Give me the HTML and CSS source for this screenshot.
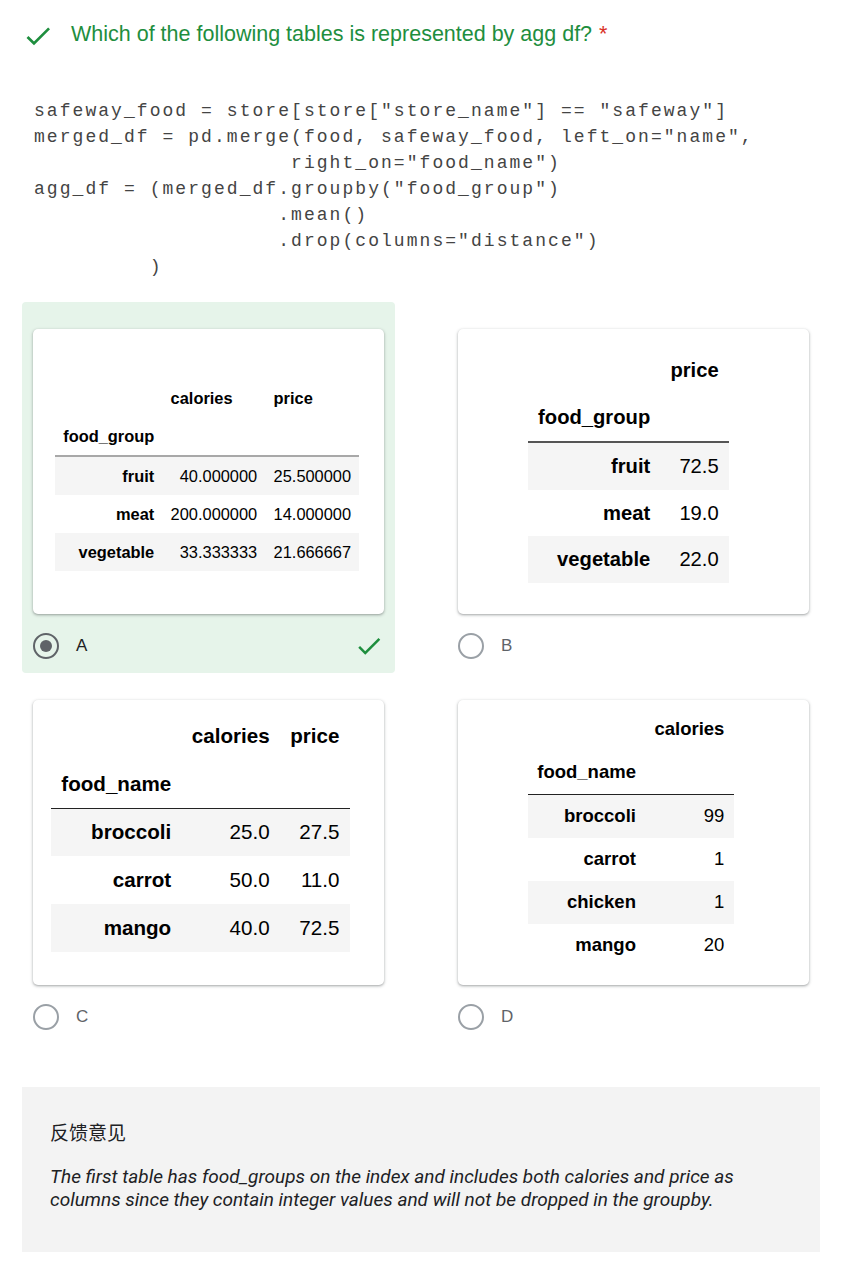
FILE: index.html
```html
<!DOCTYPE html>
<html lang="en">
<head>
<meta charset="utf-8">
<title>Question</title>
<link rel="stylesheet" href="styles.css">
</head>
<body>
<div class="page">
  <div class="q-head">
    <svg class="q-check" viewBox="0 0 24 24"><path d="M9 16.17L4.83 12l-1.42 1.41L9 19 21 7l-1.41-1.41z"/></svg>
    <span class="q-title">Which of the following tables is represented by agg df?<span class="req">*</span></span>
  </div>

<pre class="code">safeway_food = store[store["store_name"] == "safeway"]
merged_df = pd.merge(food, safeway_food, left_on="name",
                    right_on="food_name")
agg_df = (merged_df.groupby("food_group")
                   .mean()
                   .drop(columns="distance")
         )</pre>

  <div class="options">
    <div class="opt opt-correct">
      <div class="card card-a">
        <table class="df">
          <thead>
            <tr><th></th><th>calories</th><th>price</th></tr>
            <tr><th>food_group</th><th></th><th></th></tr>
          </thead>
          <tbody>
            <tr><th>fruit</th><td>40.000000</td><td>25.500000</td></tr>
            <tr><th>meat</th><td>200.000000</td><td>14.000000</td></tr>
            <tr><th>vegetable</th><td>33.333333</td><td>21.666667</td></tr>
          </tbody>
        </table>
      </div>
      <div class="radio-row">
        <span class="radio radio-on"></span>
        <span class="label label-on">A</span>
        <svg class="ok" viewBox="0 0 24 24"><path d="M9 16.17L4.83 12l-1.42 1.41L9 19 21 7l-1.41-1.41z"/></svg>
      </div>
    </div>

    <div class="opt">
      <div class="card card-b">
        <table class="df">
          <thead>
            <tr><th></th><th>price</th></tr>
            <tr><th>food_group</th><th></th></tr>
          </thead>
          <tbody>
            <tr><th>fruit</th><td>72.5</td></tr>
            <tr><th>meat</th><td>19.0</td></tr>
            <tr><th>vegetable</th><td>22.0</td></tr>
          </tbody>
        </table>
      </div>
      <div class="radio-row">
        <span class="radio"></span>
        <span class="label">B</span>
      </div>
    </div>

    <div class="opt">
      <div class="card card-c">
        <table class="df">
          <thead>
            <tr><th></th><th>calories</th><th>price</th></tr>
            <tr><th>food_name</th><th></th><th></th></tr>
          </thead>
          <tbody>
            <tr><th>broccoli</th><td>25.0</td><td>27.5</td></tr>
            <tr><th>carrot</th><td>50.0</td><td>11.0</td></tr>
            <tr><th>mango</th><td>40.0</td><td>72.5</td></tr>
          </tbody>
        </table>
      </div>
      <div class="radio-row">
        <span class="radio"></span>
        <span class="label">C</span>
      </div>
    </div>

    <div class="opt">
      <div class="card card-d">
        <table class="df">
          <thead>
            <tr><th></th><th>calories</th></tr>
            <tr><th>food_name</th><th></th></tr>
          </thead>
          <tbody>
            <tr><th>broccoli</th><td>99</td></tr>
            <tr><th>carrot</th><td>1</td></tr>
            <tr><th>chicken</th><td>1</td></tr>
            <tr><th>mango</th><td>20</td></tr>
          </tbody>
        </table>
      </div>
      <div class="radio-row">
        <span class="radio"></span>
        <span class="label">D</span>
      </div>
    </div>
  </div>

  <div class="feedback">
    <div class="fb-title">反馈意见</div>
    <p class="fb-text">The first table has food_groups on the index and includes both calories and price as columns since they contain integer values and will not be dropped in the groupby.</p>
  </div>
</div>
</body>
</html>
```

FILE: styles.css
```css
html, body {
  margin: 0;
  padding: 0;
  background: #fff;
}

.page {
  padding: 18px 21px 17px 22px;
  font-family: "Liberation Sans", Arial, sans-serif;
  color: #202124;
}

.q-head {
  display: flex;
  align-items: center;
  height: 32px;
}

.q-check {
  width: 32px;
  height: 32px;
  fill: #1e8e3e;
  flex: none;
  margin-top: 4px;
}

.q-title {
  margin-left: 17px;
  font-size: 21.5px;
  color: #1e8e3e;
}

.req {
  color: #d93025;
  margin-left: 7px;
}

.code {
  margin: 48px 0 0 12px;
  font-family: "Liberation Mono", "Courier New", monospace;
  font-size: 18px;
  line-height: 26px;
  letter-spacing: 2.05px;
  color: #444;
}

.options {
  margin-top: 22px;
  display: grid;
  grid-template-columns: 373px 373px;
  column-gap: 52px;
}

.opt {
  padding: 27px 11px 14px 11px;
  border-radius: 4px;
}

.opt-correct {
  background: #e6f4ea;
}

.card {
  height: 285px;
  box-sizing: border-box;
  background: #fff;
  border-radius: 5px;
  box-shadow: 0 1px 2px rgba(60, 64, 67, 0.3), 0 1px 3px 1px rgba(60, 64, 67, 0.15);
  display: flex;
  align-items: flex-start;
  justify-content: flex-start;
}

.card-a { font-size: 16.4px; padding: 50px 0 0 22px; }
.card-b { font-size: 20.2px; padding: 18px 0 0 70px; }
.card-c { font-size: 20.6px; padding: 12px 0 0 18px; }
.card-d { font-size: 18.5px; padding: 8px 0 0 70px; }

.df {
  border-collapse: collapse;
  border-spacing: 0;
  font-family: "Liberation Sans", Arial, sans-serif;
  color: #000;
}

.df th,
.df td {
  padding: 0 0.5em;
  height: 2.32em;
  white-space: nowrap;
}

.df th {
  font-weight: bold;
}

.df thead th {
  text-align: left;
}

.df tbody th,
.df td {
  text-align: right;
  font-weight: normal;
}

.df tbody th {
  font-weight: bold;
}

.df thead {
  border-bottom: 1px solid #222;
}

.card-a .df thead { border-bottom: 2px solid #a8a8a8; }
.card-b .df thead { border-bottom: 2px solid #555; }

.df tbody tr:nth-child(odd) {
  background: #f5f5f5;
}

.radio-row {
  margin-top: 19px;
  height: 26px;
  display: flex;
  align-items: center;
}

.radio {
  width: 26px;
  height: 26px;
  box-sizing: border-box;
  border: 2px solid #9aa0a6;
  border-radius: 50%;
  display: flex;
  align-items: center;
  justify-content: center;
  flex: none;
}

.radio-on {
  border-color: #5f6368;
}

.radio-on::after {
  content: "";
  width: 12px;
  height: 12px;
  border-radius: 50%;
  background: #5f6368;
}

.label {
  margin-left: 17px;
  font-size: 17px;
  color: #5f6368;
}

.label-on {
  color: #202124;
}

.ok {
  margin-left: auto;
  width: 30px;
  height: 30px;
  fill: #1e8e3e;
}

.feedback {
  margin-top: 43px;
  background: #f3f3f3;
  padding: 32px 28px 41px 28px;
}

.fb-title {
  font-family: "Noto Sans CJK SC", sans-serif;
  font-size: 19px;
  line-height: 26px;
  color: #202124;
}

.fb-text {
  max-width: 730px;
  margin: 20px 0 0 0;
  font-family: Roboto, "Liberation Sans", sans-serif;
  font-style: italic;
  font-size: 19px;
  line-height: 23px;
  color: #202124;
}
```
